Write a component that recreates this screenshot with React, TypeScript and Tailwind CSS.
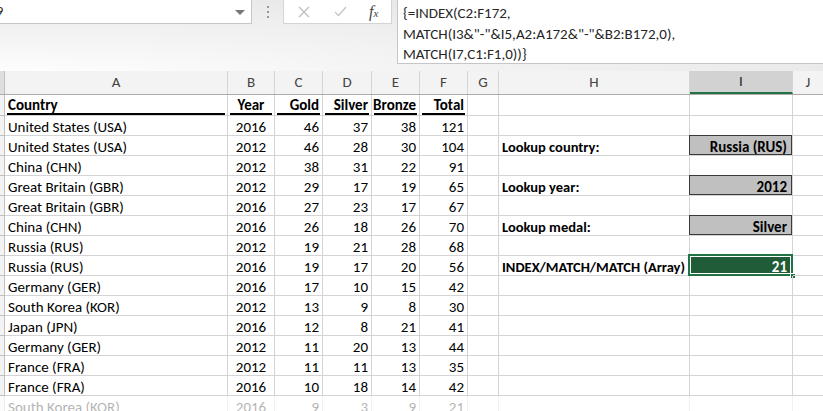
import React from 'react';

const FONT = { fontFamily: 'Carlito, Lato, "Liberation Sans", sans-serif' };

// column widths A..K (px, border included)
const COLS = [223, 47, 48, 49, 48, 48, 31, 191, 103, 31, 60];
const LETTERS = ['A', 'B', 'C', 'D', 'E', 'F', 'G', 'H', 'I', 'J', 'K'];

type Row = [string, number, number, number, number, number];

const DATA: Row[] = [
  ['United States (USA)', 2016, 46, 37, 38, 121],
  ['United States (USA)', 2012, 46, 28, 30, 104],
  ['China (CHN)', 2012, 38, 31, 22, 91],
  ['Great Britain (GBR)', 2012, 29, 17, 19, 65],
  ['Great Britain (GBR)', 2016, 27, 23, 17, 67],
  ['China (CHN)', 2016, 26, 18, 26, 70],
  ['Russia (RUS)', 2012, 19, 21, 28, 68],
  ['Russia (RUS)', 2016, 19, 17, 20, 56],
  ['Germany (GER)', 2016, 17, 10, 15, 42],
  ['South Korea (KOR)', 2012, 13, 9, 8, 30],
  ['Japan (JPN)', 2016, 12, 8, 21, 41],
  ['Germany (GER)', 2012, 11, 20, 13, 44],
  ['France (FRA)', 2012, 11, 11, 13, 35],
  ['France (FRA)', 2016, 10, 18, 14, 42],
  ['South Korea (KOR)', 2016, 9, 3, 9, 21],
];

// lookup block in H / I, keyed by row number
const LOOKUP: Record<number, { label: string; value: string; result?: boolean }> = {
  3: { label: 'Lookup country:', value: 'Russia (RUS)' },
  5: { label: 'Lookup year:', value: '2012' },
  7: { label: 'Lookup medal:', value: 'Silver' },
  9: { label: 'INDEX/MATCH/MATCH (Array)', value: '21', result: true },
};

function Cell({
  w,
  align = 'left',
  children,
  className = '',
}: {
  w: number;
  align?: 'left' | 'right' | 'center';
  children?: React.ReactNode;
  className?: string;
}) {
  const justify = align === 'right' ? 'justify-end' : align === 'center' ? 'justify-center' : 'justify-start';
  return (
    <div
      className={`relative flex shrink-0 items-center ${justify} whitespace-nowrap border-r border-b border-[#d4d4d4] px-[3px] pt-[3px] leading-[18px] ${className}`}
      style={{ width: w }}
    >
      {children}
    </div>
  );
}

function HeadCell({ w, label, align }: { w: number; label: string; align: 'left' | 'right' | 'center' }) {
  const justify = align === 'right' ? 'justify-end' : align === 'center' ? 'justify-center' : 'justify-start';
  return (
    <div className="flex shrink-0 items-end border-r border-b border-[#d4d4d4] px-[2px]" style={{ width: w }}>
      <div className={`flex w-full ${justify} whitespace-nowrap border-b-2 border-black px-[1px] font-bold leading-[16px]`}>
        {label}
      </div>
    </div>
  );
}

function LookupCells({ row }: { row: number }) {
  const item = LOOKUP[row];
  if (!item) {
    return (
      <>
        <Cell w={COLS[7]} />
        <Cell w={COLS[8]} />
      </>
    );
  }
  return (
    <>
      <Cell w={COLS[7]} className="text-[14.5px] font-bold">
        {item.label}
      </Cell>
      {item.result ? (
        <Cell w={COLS[8]} align="right" className="bg-[#1f5c37] font-bold text-white">
          <div className="absolute -left-[2px] -top-[2px] -right-[1px] -bottom-[1px] border-2 border-[#217346]">
            <div className="h-full w-full border border-white" />
          </div>
          <span className="relative pr-[2px]">{item.value}</span>
          <div className="absolute -right-[4px] -bottom-[4px] h-[6px] w-[6px] border border-white bg-[#217346]" />
        </Cell>
      ) : (
        <Cell w={COLS[8]} align="right" className="bg-[#c0c0c0] font-bold">
          <div className="absolute -left-px -top-px right-0 bottom-0 border border-[#3a3a3a]" />
          <span className="relative pr-[2px]">{item.value}</span>
        </Cell>
      )}
    </>
  );
}

function Blank({ from }: { from: number }) {
  return (
    <>
      {COLS.slice(from).map((w, i) => (
        <Cell key={i} w={w} />
      ))}
    </>
  );
}

export default function App() {
  return (
    <div className="h-[411px] w-[823px] overflow-hidden bg-white text-[15px] text-black" style={FONT}>
      {/* formula bar area */}
      <div className="flex h-[71px] bg-[radial-gradient(ellipse_at_0%_110%,#ffffff_0%,#f4f4f4_35%,#e8e8e8_80%)]">
        <div className="relative flex h-[24px] w-[252px] shrink-0 items-center overflow-hidden border-r border-b border-[#c6c6c6] bg-white">
          <span className="-ml-[8px] text-[15px] text-[#333]">I9</span>
          <div className="absolute right-[6px] top-[10px] h-0 w-0 border-x-[5px] border-t-[5px] border-x-transparent border-t-[#777]" />
        </div>
        <div className="flex w-[31px] shrink-0 flex-col items-center gap-[3px] pt-[6px]">
          <div className="h-[2px] w-[2px] bg-[#999]" />
          <div className="h-[2px] w-[2px] bg-[#999]" />
          <div className="h-[2px] w-[2px] bg-[#999]" />
        </div>
        <div className="flex h-[24px] w-[109px] shrink-0 items-center border-x border-b border-[#d4d4d4] bg-white">
          <svg width="12" height="12" viewBox="0 0 12 12" className="ml-[14px]">
            <path d="M1 1 L11 11 M11 1 L1 11" stroke="#bdbdbd" strokeWidth="1.2" fill="none" />
          </svg>
          <svg width="13" height="11" viewBox="0 0 13 11" className="ml-[24px]">
            <path d="M1 6 L4.5 9.5 L12 1" stroke="#c4c4c4" strokeWidth="1.2" fill="none" />
          </svg>
          <span className="ml-[22px] font-['Liberation_Serif',serif] text-[16px] italic leading-none text-[#444]">
            f<span className="text-[11px]">x</span>
          </span>
        </div>
        <div className="ml-[5px] h-[64px] flex-1 border-l border-b border-[#c6c6c6] bg-white pl-[5px] pt-[3px] text-[15px] leading-[20.5px] text-[#262626]">
          <div>{'{=INDEX(C2:F172,'}</div>
          <div>{'MATCH(I3&"-"&I5,A2:A172&"-"&B2:B172,0),'}</div>
          <div>{'MATCH(I7,C1:F1,0))}'}</div>
        </div>
      </div>

      {/* column headers */}
      <div className="flex h-[24px] border-b border-[#ababab] bg-[#f3f3f3] text-[15px] text-[#444]">
        <div className="w-[5px] shrink-0 border-r border-[#c0c0c0] bg-[#dedede]" />
        {LETTERS.map((l, i) => (
          <div
            key={l}
            className={`flex shrink-0 items-center justify-center border-r border-[#d5d5d5] ${
              l === 'I' ? 'border-b-2 border-b-[#217346] bg-[#d2d2d2] text-[#222]' : ''
            }`}
            style={{ width: COLS[i] }}
          >
            {l === 'K' ? '' : l}
          </div>
        ))}
      </div>

      {/* row 1 */}
      <div className="flex h-[21px]">
        <div className="w-[5px] shrink-0 border-r border-b border-[#c0c0c0] bg-[#f3f3f3]" />
        <HeadCell w={COLS[0]} label="Country" align="left" />
        <HeadCell w={COLS[1]} label="Year" align="center" />
        <HeadCell w={COLS[2]} label="Gold" align="right" />
        <HeadCell w={COLS[3]} label="Silver" align="right" />
        <HeadCell w={COLS[4]} label="Bronze" align="right" />
        <HeadCell w={COLS[5]} label="Total" align="right" />
        <Blank from={6} />
      </div>

      {DATA.map((r, idx) => {
        const rowNum = idx + 2;
        const last = idx === DATA.length - 1;
        return (
          <div key={idx} className={`flex h-[20px] ${last ? 'opacity-30' : ''}`}>
            <div className="w-[5px] shrink-0 border-r border-b border-[#c0c0c0] bg-[#f3f3f3]" />
            <Cell w={COLS[0]}>{r[0]}</Cell>
            <Cell w={COLS[1]} align="center">
              {r[1]}
            </Cell>
            <Cell w={COLS[2]} align="right">
              {r[2]}
            </Cell>
            <Cell w={COLS[3]} align="right">
              {r[3]}
            </Cell>
            <Cell w={COLS[4]} align="right">
              {r[4]}
            </Cell>
            <Cell w={COLS[5]} align="right">
              {r[5]}
            </Cell>
            <Cell w={COLS[6]} />
            <LookupCells row={rowNum} />
            <Blank from={9} />
          </div>
        );
      })}
    </div>
  );
}
